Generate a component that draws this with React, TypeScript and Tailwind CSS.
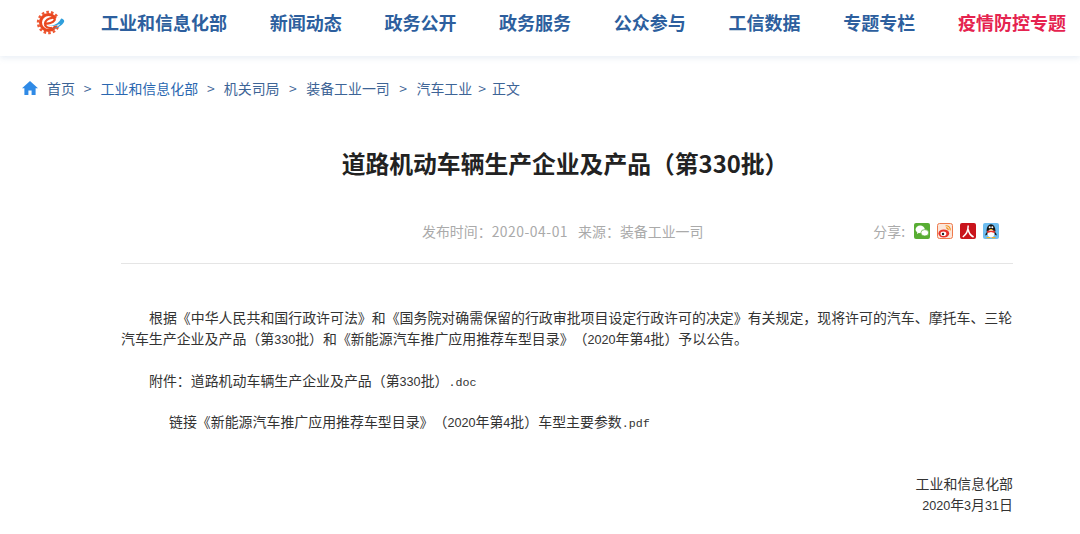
const navItems = ["工业和信息化部", "新闻动态", "政务公开", "政务服务", "公众参与", "工信数据", "专题专栏"];

function Logo() {
  return (
    <svg width="30" height="25" viewBox="0 0 30 25" aria-hidden>
      <circle cx="12.5" cy="12.5" r="10.4" fill="none" stroke="#ee5a35" strokeWidth="2.6" strokeDasharray="2.6 2.05" />
      <circle cx="12.5" cy="12.5" r="8" fill="none" stroke="#e9471f" strokeWidth="3" />
      <path d="M16 9.5 24 7v8l-8 1z" fill="#fff" />
      <path d="M8 13.2c4.4 1 9-.4 10.6-3 .8-1.4-.4-2.6-2.6-2.4-3.6.3-6.6 2.8-7 5.6-.4 3.2 3 5.2 7 4.4" fill="none" stroke="#e9471f" strokeWidth="2.2" />
      <path d="M11.5 15.4c6 .6 10.6-1.6 13-6 .4-.7 1-1 1.7-.7 1.8.7 2.4 2.1 1.8 3.4-1.8 3.4-6.4 6.4-11.8 6.6 4-1.2 7-3 8-5-3 1.8-7.6 2.7-12.7 1.7z" fill="#2f9fdc" />
    </svg>
  );
}

function ShareIcons() {
  return (
    <div className="flex items-center gap-[7px]">
      <svg width="16" height="16" viewBox="0 0 16 16" aria-hidden>
        <rect width="16" height="16" rx="2" fill="#58ad33" />
        <ellipse cx="6.2" cy="6.4" rx="4.6" ry="3.8" fill="#fff" />
        <path d="M3.4 8.6 3 11l2.4-1.4z" fill="#fff" />
        <ellipse cx="10.8" cy="9.8" rx="3.9" ry="3.2" fill="#fff" stroke="#58ad33" strokeWidth="0.7" />
      </svg>
      <svg width="16" height="16" viewBox="0 0 16 16" aria-hidden>
        <rect x="0.5" y="0.5" width="15" height="15" rx="2" fill="#fbe6da" stroke="#ee7a4c" />
        <ellipse cx="6.8" cy="10.4" rx="5.4" ry="4" fill="#e5322b" />
        <ellipse cx="6.4" cy="10.8" rx="2.9" ry="2.3" fill="#fff" />
        <circle cx="6" cy="11" r="1.2" fill="#222" />
        <path d="M8.6 2.8c2.8-.4 5 1.6 4.6 4.6M9 5c1.4-.2 2.4.8 2.2 2.2" fill="none" stroke="#f2941f" strokeWidth="1.2" />
      </svg>
      <svg width="16" height="16" viewBox="0 0 16 16" aria-hidden>
        <rect width="16" height="16" rx="2" fill="#c9141c" />
        <path d="M8.2 2.4C8.2 7 6.8 11 2.8 14M8.2 6.5c.6 3.4 2.4 6 5.4 7.5" fill="none" stroke="#fff" strokeWidth="1.5" />
      </svg>
      <svg width="16" height="16" viewBox="0 0 16 16" aria-hidden>
        <rect width="16" height="16" rx="2" fill="#6dbdf0" />
        <ellipse cx="8" cy="7.2" rx="4.4" ry="6" fill="#151515" />
        <path d="M3.6 9c-1 1.6-1.6 3-1 3.6l1.6-1zM12.4 9c1 1.6 1.6 3 1 3.6l-1.6-1z" fill="#151515" />
        <ellipse cx="8" cy="10.6" rx="3.4" ry="3.8" fill="#fff" />
        <path d="M3.8 7.8h8.4L11.4 10 8 8.9 4.6 10z" fill="#e8352b" />
        <path d="M6 6h4L8 7.4z" fill="#f6b21b" />
        <circle cx="6.7" cy="4.2" r="1" fill="#fff" />
        <circle cx="9.3" cy="4.2" r="1" fill="#fff" />
        <path d="M3.6 14.6h3.6M8.8 14.6h3.6" stroke="#f6b21b" strokeWidth="1.4" />
      </svg>
    </div>
  );
}

function HomeIcon() {
  return (
    <svg width="16" height="14" viewBox="0 0 16 14" className="mr-[9px]" aria-hidden>
      <path d="M8 0 0 7.2h2.4V14h4V9.6h3.2V14h4V7.2H16z" fill="#2f8ae6" />
    </svg>
  );
}

// digits in the article are narrow, about 7px each
function Num({ children }: { children: string }) {
  return <span className="font-['Liberation_Sans',sans-serif] text-[12.6px] leading-none">{children}</span>;
}

function Ext({ children }: { children: string }) {
  return <span className="font-['Liberation_Mono',monospace] text-[11.67px] leading-none">{children}</span>;
}

export default function App() {
  return (
    <div className="h-[534px] overflow-hidden bg-white font-['Noto_Sans_CJK_SC','Liberation_Sans',sans-serif]">
      <header className="flex h-[56px] items-center justify-between pb-[12px] pl-[36px] pr-[14px] shadow-[0_2px_6px_rgba(190,205,225,0.35)]">
        <Logo />
        <nav className="flex w-[965px] items-center justify-between text-[18px] font-bold text-[#2d5f9e]">
          {navItems.map((item) => (
            <span key={item}>{item}</span>
          ))}
          <span className="text-[#e5234f]">疫情防控专题</span>
        </nav>
      </header>

      <div className="flex items-center pl-[22px] pt-[21px] text-[13.93px] leading-[22px] text-[#3d6496]">
        <HomeIcon />
        <span>首页</span>
        <span className="mx-[9px]">&gt;</span>
        <span className="text-[#2a67b0]">工业和信息化部</span>
        <span className="mx-[9px]">&gt;</span>
        <span>机关司局</span>
        <span className="mx-[9.5px]">&gt;</span>
        <span>装备工业一司</span>
        <span className="mx-[9.5px]">&gt;</span>
        <span>汽车工业</span>
        <span className="mx-[6px]">&gt;</span>
        <span>正文</span>
      </div>

      <h1 className="mt-[46px] pl-[50px] text-center text-[23.8px] font-bold leading-[36px] text-[#222]">
        道路机动车辆生产企业及产品（第330批）
      </h1>

      <main className="mx-[121px] w-[892px]">
        <div className="mt-[31px] flex h-[52px] items-start border-b border-[#e5e5e5] pl-[301px] pr-[14px] pt-[8px] text-[13.93px] leading-[22px] text-[#aaa]">
          <span>
            发布时间：<span className="tracking-[0.5px]">2020-04-01</span>
          </span>
          <span className="ml-[10px]">来源：装备工业一司</span>
          <div className="ml-auto flex items-center gap-[9px]">
            <span>分享:</span>
            <ShareIcons />
          </div>
        </div>

        <div className="mt-[43px] text-[13.93px] leading-[21px] text-[#333] [text-spacing-trim:space-all]">
          <p className="indent-[28px]">
            根据《中华人民共和国行政许可法》和《国务院对确需保留的行政审批项目设定行政许可的决定》有关规定，现将许可的汽车、摩托车、三轮汽车生产企业及产品（第<Num>330</Num>批）和《新能源汽车推广应用推荐车型目录》（<Num>2020</Num>年第<Num>4</Num>批）予以公告。
          </p>
          <p className="mt-[21px] indent-[28px]">
            附件：道路机动车辆生产企业及产品（第<Num>330</Num>批）<Ext>.doc</Ext>
          </p>
          <p className="mt-[20px] indent-[48px]">
            链接《新能源汽车推广应用推荐车型目录》（<Num>2020</Num>年第<Num>4</Num>批）车型主要参数<Ext>.pdf</Ext>
          </p>
          <div className="mt-[41px] text-right">
            <p>工业和信息化部</p>
            <p>
              <Num>2020</Num>年<Num>3</Num>月<Num>31</Num>日
            </p>
          </div>
        </div>
      </main>
    </div>
  );
}
